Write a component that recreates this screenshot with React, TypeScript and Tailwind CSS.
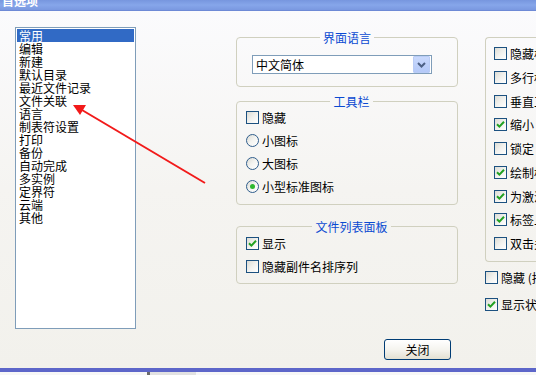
import React from 'react';

const listItems = [
  '常用',
  '编辑',
  '新建',
  '默认目录',
  '最近文件记录',
  '文件关联',
  '语言',
  '制表符设置',
  '打印',
  '备份',
  '自动完成',
  '多实例',
  '定界符',
  '云端',
  '其他',
];

const rightItems: { label: string; checked?: boolean }[] = [
  { label: '隐藏标签栏' },
  { label: '多行标签栏' },
  { label: '垂直工具栏' },
  { label: '缩小 到托盘', checked: true },
  { label: '锁定 位置' },
  { label: '绘制标签页', checked: true },
  { label: '为激活标签', checked: true },
  { label: '标签上关闭', checked: true },
  { label: '双击关闭' },
];

function CheckBox({ checked }: { checked?: boolean }) {
  return (
    <span className="flex h-[13px] w-[13px] shrink-0 items-center justify-center border border-[#1c5180] bg-linear-to-br from-[#dcdcd5] via-[#f1f1ee] to-white">
      {checked && (
        <svg width="9" height="9" viewBox="0 0 9 9">
          <path d="M1 4.2 L3.4 6.6 L8 1.8" stroke="#21a121" strokeWidth="2" fill="none" />
        </svg>
      )}
    </span>
  );
}

function Radio({ checked }: { checked?: boolean }) {
  return (
    <span className="flex h-[13px] w-[13px] shrink-0 items-center justify-center rounded-full border border-[#2f5d8c] bg-linear-to-br from-[#dcdcd5] via-[#f4f4f1] to-white">
      {checked && <span className="h-[5px] w-[5px] rounded-full bg-[#2eb82e]" />}
    </span>
  );
}

function Row({ children, label }: { children: React.ReactNode; label: string }) {
  return (
    <div className="flex h-[13px] items-center gap-[3px] whitespace-nowrap">
      {children}
      <span className="leading-[13px]">{label}</span>
    </div>
  );
}

function Group({
  title,
  className,
  children,
}: {
  title: string;
  className?: string;
  children: React.ReactNode;
}) {
  return (
    <fieldset className={`w-[222px] rounded-[4px] border border-[#d0d0bf] ${className ?? ''}`}>
      <legend className="mx-auto px-[3px] leading-[13px] text-[#0a4ad2]">{title}</legend>
      {children}
    </fieldset>
  );
}

export default function App() {
  return (
    <div className="relative flex h-[375px] w-[536px] flex-col overflow-hidden bg-white font-['Noto_Sans_CJK_SC','Liberation_Sans',sans-serif] text-[12px] text-black">
      {/* title bar */}
      <div className="h-[11px] shrink-0 overflow-hidden border-b border-[#6e8ad6] bg-linear-to-b from-[#7796de] via-[#86a6ea] to-[#7a98e0]">
        <span className="ml-[2px] -mt-[6px] block text-[12px] font-bold leading-[14px] text-white">首选项</span>
      </div>

      {/* dialog body */}
      <div className="flex min-h-0 flex-1 items-start bg-linear-to-b from-[#fbfbfd] via-[#f5f4f1] to-[#f2f1ec]">
        {/* category list */}
        <div className="ml-[15px] mt-[16px] h-[302px] w-[121px] shrink-0 border border-[#7f9db9] bg-white p-px">
          {listItems.map((item, i) => (
            <div
              key={item}
              className={`h-[13px] pl-[2px] leading-[13px] ${i === 0 ? 'bg-[#316ac5] text-white' : ''}`}
            >
              {item}
            </div>
          ))}
        </div>

        {/* middle column */}
        <div className="ml-[100px] mt-[20px] flex w-[222px] shrink-0 flex-col">
          <Group title="界面语言" className="px-[15px] pb-[12px] pt-[11px]">
            <div className="flex h-[19px] w-[180px] items-center border border-[#7f9db9] bg-white pl-[3px] pr-px">
              <span className="flex-1 leading-[13px]">中文简体</span>
              <span className="flex h-[17px] w-[17px] items-center justify-center rounded-[1px] border border-[#b9ccf6] bg-linear-to-b from-[#c9d9fd] to-[#b4c9f8]">
                <svg width="9" height="6" viewBox="0 0 9 6">
                  <path d="M1 1 L4.5 4.5 L8 1" stroke="#4d6185" strokeWidth="2" fill="none" />
                </svg>
              </span>
            </div>
          </Group>

          <Group title="工具栏" className="mt-[8px] flex flex-col gap-[10px] pb-[11px] pl-[9px] pt-[3px]">
            <Row label="隐藏">
              <CheckBox />
            </Row>
            <Row label="小图标">
              <Radio />
            </Row>
            <Row label="大图标">
              <Radio />
            </Row>
            <Row label="小型标准图标">
              <Radio checked />
            </Row>
          </Group>

          <Group title="文件列表面板" className="mt-[15px] flex flex-col gap-[10px] pb-[10px] pl-[9px] pt-[4px]">
            <Row label="显示">
              <CheckBox checked />
            </Row>
            <Row label="隐藏副件名排序列">
              <CheckBox />
            </Row>
          </Group>

          <button className="mr-[7px] mt-[55px] flex h-[21px] w-[67px] items-center justify-center self-end rounded-[3px] border border-[#003c74] bg-linear-to-b from-white via-[#f5f4ef] to-[#e3e0d2] leading-[13px]">
            关闭
          </button>
        </div>

        {/* right column */}
        <div className="ml-[27px] mt-[26px] flex shrink-0 flex-col">
          <div className="flex w-[80px] flex-col gap-[10.75px] rounded-l-[4px] border border-r-0 border-[#d0d0bf] pb-[11px] pl-[8px] pt-[9px]">
            {rightItems.map((it) => (
              <Row key={it.label} label={it.label}>
                <CheckBox checked={it.checked} />
              </Row>
            ))}
          </div>
          <div className="mt-[9px] flex flex-col gap-[14px]">
            <Row label="隐藏 (托盘图标)">
              <CheckBox />
            </Row>
            <Row label="显示状态栏">
              <CheckBox checked />
            </Row>
          </div>
        </div>
      </div>

      {/* window bottom edge + taskbar sliver */}
      <div className="h-[4px] shrink-0 bg-[#5d66c9]" />
      <div className="flex h-[3px] shrink-0 bg-[#f7f7f7]">
        <div className="ml-[147px] w-[3px] bg-[#6b6b6b]" />
        <div className="w-[46px] bg-[#e2e2e2]" />
      </div>

      {/* red annotation arrow */}
      <svg className="pointer-events-none absolute inset-0" width="536" height="375">
        <line x1="205" y1="183" x2="82" y2="110" stroke="#f21a1a" strokeWidth="2" />
        <polygon points="73,105 86,105 80,115" fill="#f21a1a" />
      </svg>
    </div>
  );
}
